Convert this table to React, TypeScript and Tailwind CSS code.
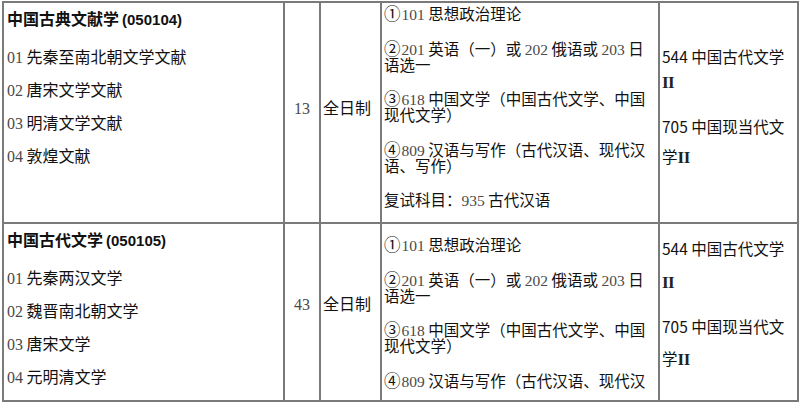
import React from "react";

const D = ({ children }: { children: React.ReactNode }) => (
  <span className="font-['Liberation_Serif',serif] text-[#4a4a4a]">{children}</span>
);

const C = ({ children }: { children: React.ReactNode }) => (
  <span className="text-[16.5px] leading-none mr-[1px]">{children}</span>
);

const R = () => (
  <span className="font-['Liberation_Serif',serif] text-[17px] font-bold tracking-[-0.5px] text-[#222]">II</span>
);

function Col1({ title, code, items }: { title: string; code: string; items: [string, string][] }) {
  return (
    <div className="border-r-2 border-b-2 border-[#7a7a7a] pl-[3px] text-[16px] text-[#111]">
      <div className="h-[30px] leading-[30px] font-bold whitespace-nowrap overflow-hidden">
        {title}
        <span className="ml-[3px] font-['Liberation_Sans',sans-serif] text-[15px]">({code})</span>
      </div>
      <div className="mt-[7px] flex flex-col">
        {items.map(([n, t]) => (
          <div key={n} className="h-[33px] leading-[33px] whitespace-nowrap overflow-hidden">
            <D>{n}</D> {t}
          </div>
        ))}
      </div>
    </div>
  );
}

function Col4({ paras, pt }: { paras: React.ReactNode[][]; pt: string }) {
  return (
    <div
      className={`border-r-2 border-b-2 border-[#7a7a7a] pl-[2px] text-[15.5px] text-[#111] flex flex-col gap-[18.5px] overflow-hidden ${pt}`}
    >
      {paras.map((lines, i) => (
        <div key={i} className="flex flex-col">
          {lines.map((l, j) => (
            <div key={j} className="h-[16px] leading-[16px] whitespace-nowrap">
              {l}
            </div>
          ))}
        </div>
      ))}
    </div>
  );
}

function Col5({ pt, g1, g2, g3 }: { pt: string; g1: string; g2: string; g3: string }) {
  return (
    <div className={`border-r-2 border-b-2 border-[#7a7a7a] pl-[2px] text-[15.5px] text-[#111] flex flex-col ${pt}`}>
      <div className="h-[20px] leading-[20px] whitespace-nowrap">544 中国古代文学</div>
      <div className={`h-[20px] leading-[20px] ${g1}`}>
        <R />
      </div>
      <div className={`h-[20px] leading-[20px] whitespace-nowrap ${g2}`}>705 中国现当代文</div>
      <div className={`h-[20px] leading-[20px] whitespace-nowrap ${g3}`}>
        学<R />
      </div>
    </div>
  );
}

export default function App() {
  const p1 = [<><C>①</C><D>101</D> 思想政治理论</>];
  const p2 = [<><C>②</C><D>201</D> 英语（一）或 <D>202</D> 俄语或 <D>203</D> 日</>, <>语选一</>];
  const p3 = [<><C>③</C><D>618</D> 中国文学（中国古代文学、中国</>, <>现代文学）</>];
  const p4a = <><C>④</C><D>809</D> 汉语与写作（古代汉语、现代汉</>;
  const p4 = [p4a, <>语、写作）</>];
  const p5 = [<>复试科目：<D>935</D> 古代汉语</>];

  return (
    <div className="w-[800px] h-[403px] bg-white overflow-hidden pt-[1px] pl-[2px] font-['Noto_Sans_CJK_SC','Noto_Sans',sans-serif]">
      <div className="grid grid-cols-[281px_36px_61px_278px_139px] grid-rows-[221px_178px] border-t-2 border-l-2 border-[#7a7a7a] w-[797px]">
        {/* Row 1 */}
        <Col1
          title="中国古典文献学"
          code="050104"
          items={[
            ["01", "先秦至南北朝文学文献"],
            ["02", "唐宋文学文献"],
            ["03", "明清文学文献"],
            ["04", "敦煌文献"],
          ]}
        />
        <div className="border-r-2 border-b-2 border-[#7a7a7a] pt-[94px] text-center text-[16px] leading-[20px]">
          <D>13</D>
        </div>
        <div className="border-r-2 border-b-2 border-[#7a7a7a] pt-[94px] pl-[2px] text-[16px] leading-[20px] text-[#111] whitespace-nowrap">
          全日制
        </div>
        <Col4 paras={[p1, p2, p3, p4, p5]} pt="pt-[2px]" />
        <Col5 pt="pt-[43px]" g1="mt-[5px]" g2="mt-[25px]" g3="mt-[10px]" />

        {/* Row 2 */}
        <Col1
          title="中国古代文学"
          code="050105"
          items={[
            ["01", "先秦两汉文学"],
            ["02", "魏晋南北朝文学"],
            ["03", "唐宋文学"],
            ["04", "元明清文学"],
          ]}
        />
        <div className="border-r-2 border-b-2 border-[#7a7a7a] pt-[69px] text-center text-[16px] leading-[20px]">
          <D>43</D>
        </div>
        <div className="border-r-2 border-b-2 border-[#7a7a7a] pt-[69px] pl-[2px] text-[16px] leading-[20px] text-[#111] whitespace-nowrap">
          全日制
        </div>
        <Col4 paras={[p1, p2, p3, [p4a]]} pt="pt-[12px]" />
        <Col5 pt="pt-[14px]" g1="mt-[13px]" g2="mt-[25px]" g3="mt-[12px]" />
      </div>
    </div>
  );
}
